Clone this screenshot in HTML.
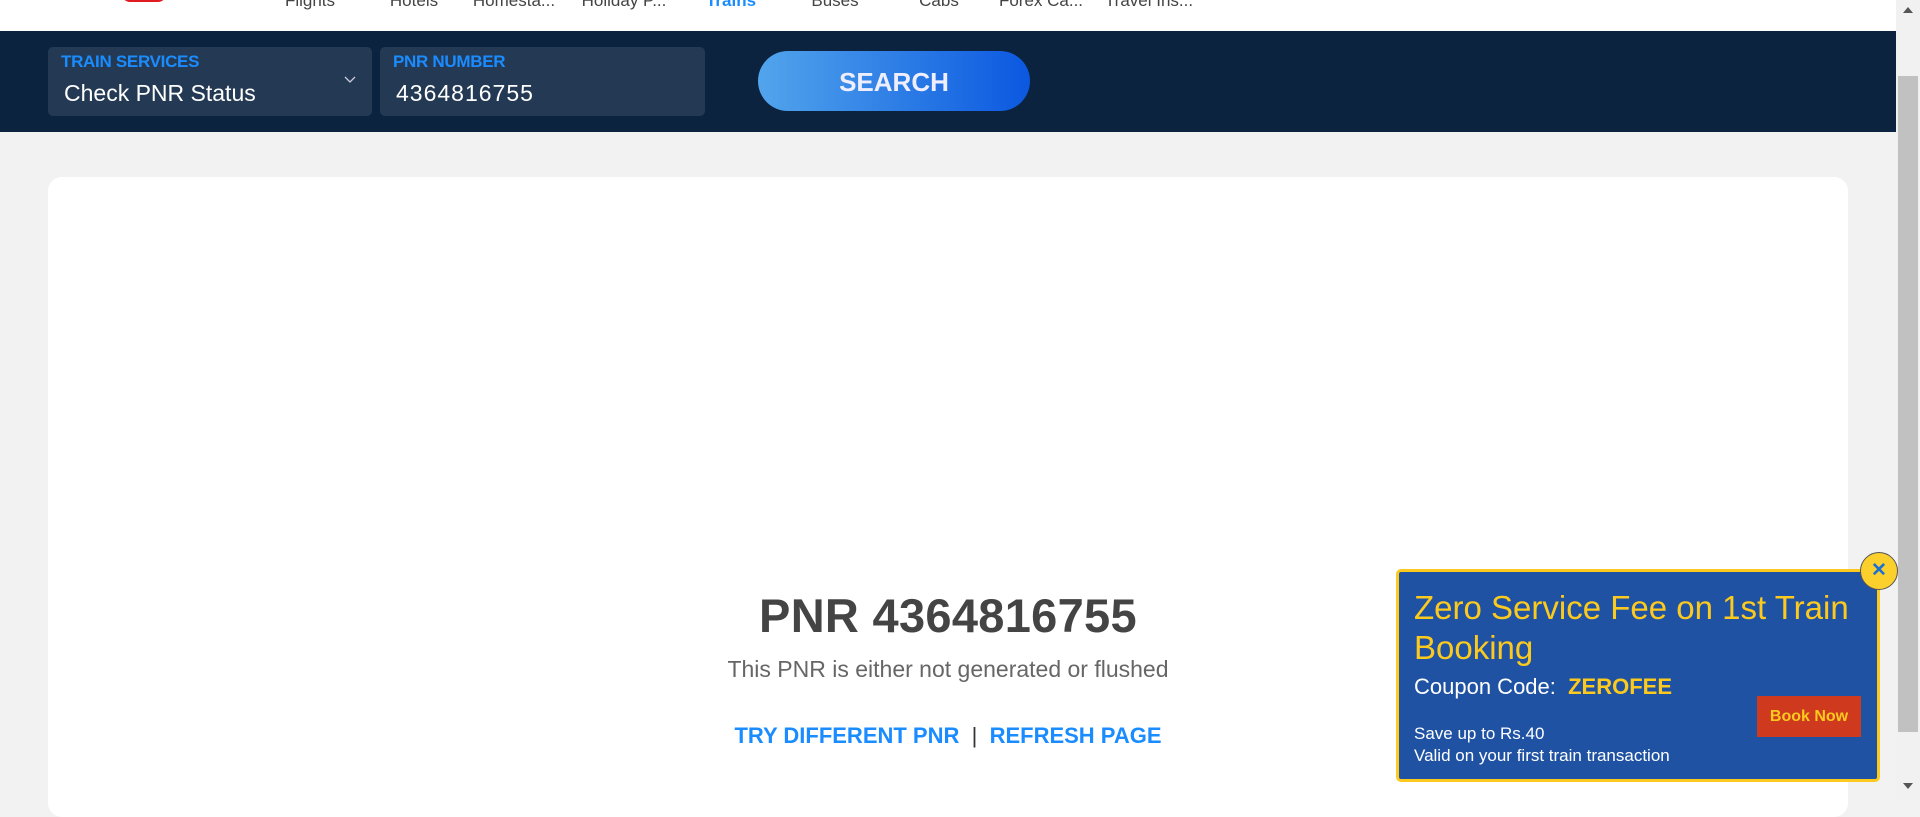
<!DOCTYPE html>
<html><head><meta charset="utf-8"><style>
*{margin:0;padding:0;box-sizing:border-box}
body{width:1920px;height:800px;overflow:hidden;background:#f2f2f2;font-family:"Liberation Sans",sans-serif;position:relative}
.top{position:absolute;left:0;top:0;width:1896px;height:31px;background:#fff}
.nav{position:absolute;top:-9px;font-size:17px;color:#444;transform:translateX(-50%);white-space:nowrap}
.logo{position:absolute;left:122px;top:-6px;width:44px;height:8px;background:#e21b22;border-radius:0 0 8px 8px}
.band{position:absolute;left:0;top:31px;width:1896px;height:101px;background:#0c2340}
.fld{position:absolute;top:47px;height:69px;background:#243a54;border-radius:5px}
.lab{position:absolute;left:13px;top:5px;color:#1a8cff;font-size:17px;font-weight:bold;letter-spacing:-0.3px}
.val{position:absolute;left:16px;top:33px;color:#fff;font-size:23px}
.btn{position:absolute;left:758px;top:51px;width:272px;height:60px;border-radius:30px;background:linear-gradient(90deg,#52a5ec,#0b58e0);color:#eef;font-weight:bold;font-size:26px;text-align:center;line-height:62px}
.card{position:absolute;left:48px;top:177px;width:1800px;height:640px;background:#fff;border-radius:14px}
.sb{position:absolute;left:1896px;top:0;width:24px;height:800px;background:#f1f1f1}
.thumb{position:absolute;left:1898px;top:76px;width:20px;height:656px;background:#c1c1c1}
.c{position:absolute;left:0;width:1896px;text-align:center}
.pop{position:absolute;left:1396px;top:569px;width:484px;height:213px;background:#1f52a3;border:3px solid #fcca1e;border-radius:5px}
.x{position:absolute;left:1860px;top:552px;width:38px;height:38px;border-radius:50%;background:#fcd02c;border:1px solid #555;color:#1a6fd6;font-weight:bold;font-size:19px;text-align:center;line-height:35px}
</style></head><body>
<div class="top">
<div class="logo"></div>
<span class="nav" style="left:310px">Flights</span>
<span class="nav" style="left:414px">Hotels</span>
<span class="nav" style="left:514px">Homesta...</span>
<span class="nav" style="left:624px">Holiday P...</span>
<span class="nav" style="left:731px;color:#1a8cff;font-weight:bold">Trains</span>
<span class="nav" style="left:835px">Buses</span>
<span class="nav" style="left:939px">Cabs</span>
<span class="nav" style="left:1041px">Forex Ca...</span>
<span class="nav" style="left:1149px">Travel Ins...</span>
</div>
<div class="band"></div>
<div class="fld" style="left:48px;width:324px"><div class="lab">TRAIN SERVICES</div><div class="val">Check PNR Status</div>
<svg style="position:absolute;left:296px;top:29px" width="12" height="8"><path d="M1 1 L6 6 L11 1" stroke="#ccd" stroke-width="1.3" fill="none"/></svg></div>
<div class="fld" style="left:380px;width:325px"><div class="lab">PNR NUMBER</div><div class="val" style="letter-spacing:1px">4364816755</div></div>
<div class="btn">SEARCH</div>
<div class="card"></div>
<div class="c" style="top:588px;font-size:47px;font-weight:bold;color:#444;letter-spacing:0.3px">PNR 4364816755</div>
<div class="c" style="top:656px;font-size:23px;color:#666">This PNR is either not generated or flushed</div>
<div class="c" style="top:723px;font-size:22px;font-weight:bold;color:#1a8cff">TRY DIFFERENT PNR <span style="color:#333;font-weight:normal">&nbsp;|&nbsp;</span> REFRESH PAGE</div>
<div class="pop">
<div style="position:absolute;left:15px;top:16px;color:#fcca1e;font-size:33px;line-height:40px;width:460px">Zero Service Fee on 1st Train Booking</div>
<div style="position:absolute;left:15px;top:102px;color:#fff;font-size:22px">Coupon Code: &nbsp;<b style="color:#fcca1e">ZEROFEE</b></div>
<div style="position:absolute;left:15px;top:151px;color:#fff;font-size:17px;line-height:22px">Save up to Rs.40<br>Valid on your first train transaction</div>
<div style="position:absolute;left:358px;top:124px;width:104px;height:41px;background:#cf3a1f;color:#fcca1e;font-weight:bold;font-size:16px;text-align:center;line-height:41px">Book Now</div>
</div>
<div class="sb"></div><div class="thumb"></div>
<svg style="position:absolute;left:1902px;top:6px" width="12" height="8"><path d="M1 7 L6 1 L11 7Z" fill="#555"/></svg>
<svg style="position:absolute;left:1902px;top:782px" width="12" height="8"><path d="M1 1 L6 7 L11 1Z" fill="#555"/></svg>
<div class="x">✕</div>
</body></html>
